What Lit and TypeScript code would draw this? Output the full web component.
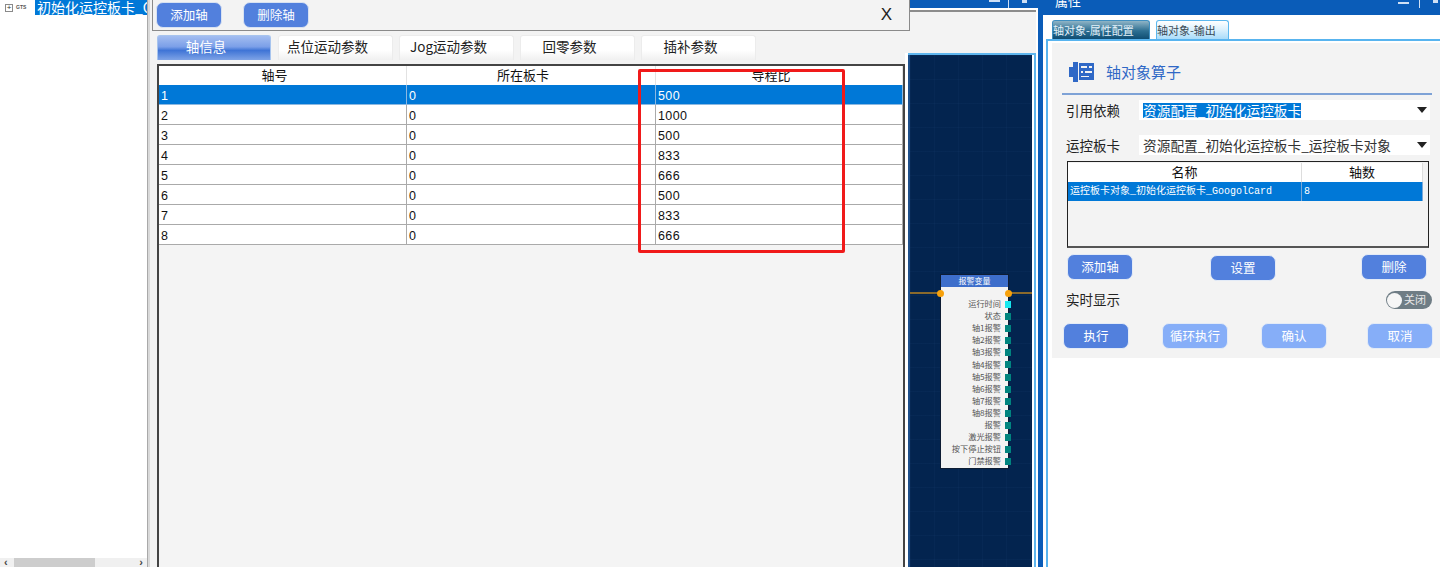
import { LitElement, html, css, svg } from "lit";
import { customElement } from "lit/decorators.js";

const axisRows = [
  ["1", "0", "500"], ["2", "0", "1000"], ["3", "0", "500"], ["4", "0", "833"],
  ["5", "0", "666"], ["6", "0", "500"], ["7", "0", "833"], ["8", "0", "666"],
];
const ports = ["运行时间", "状态", "轴1报警", "轴2报警", "轴3报警", "轴4报警", "轴5报警", "轴6报警", "轴7报警", "轴8报警", "报警", "激光报警", "按下停止按钮", "门禁报警"];

@customElement("app-root")
export class AppRoot extends LitElement {
  static styles = css`
    :host { display: block; width: 1440px; height: 567px; overflow: hidden; background: #fff; font-family: "Noto Sans CJK SC", "Liberation Sans", sans-serif; font-size: 13px; color: #111; }
    * { box-sizing: border-box; }
    .page { position: relative; display: flex; width: 1440px; height: 567px; overflow: hidden; }

    .tree { width: 148px; flex: none; display: flex; flex-direction: column; border-right: 1px solid #a9a9a9; }
    .tree-row { display: flex; align-items: flex-start; height: 16px; overflow: hidden; padding-left: 5px; flex: none; }
    .exp { width: 8px; height: 8px; margin-top: 4px; border: 1px solid #8a8a8a; font: 8px/6px "Liberation Sans", sans-serif; text-align: center; color: #333; flex: none; }
    .gts { font: bold 5px/15px "Liberation Sans", sans-serif; color: #555; width: 22px; padding-left: 3px; flex: none; }
    .sel { background: #0078d7; color: #fff; font-size: 14px; line-height: 15px; white-space: nowrap; flex: 1; overflow: hidden; padding-left: 2px; }
    .tree-fill { flex: 1; }
    .hscroll { height: 9px; background: #f0f0f0; display: flex; align-items: center; flex: none; font: bold 11px/9px "Liberation Sans", sans-serif; color: #444; justify-content: space-between; position: relative; padding: 0 4px; }
    .thumb { position: absolute; left: 14px; width: 81px; top: 0; bottom: 0; background: #cdcdcd; }

    .work { width: 890px; flex: none; display: flex; background: #fff; }
    .editor { width: 757px; flex: none; background: #f3f3f3; border-left: 2px solid #d9d9d9; display: flex; flex-direction: column; padding: 35px 0 0 7px; }
    .tabs { display: flex; height: 25px; flex: none; }
    .tab { width: 115px; margin-right: 6px; padding-right: 16px; background: linear-gradient(#fff 60%, #f0f0f0); border: 1px solid #ececec; border-bottom: none; border-radius: 3px 3px 0 0; text-align: center; line-height: 21px; font-size: 13.5px; color: #222; }
    .tab.on { width: 114px; margin-right: 7px; background: linear-gradient(#a3bdf0, #7b9fe8 45%, #3f74d6 60%, #7ea3e6); color: #fff; border-color: #a7c4ee; }
    .grid { margin-top: 4px; flex: 1; border: 2px solid #444; border-bottom: none; background: #f4f4f4; width: 748px; }
    .g-row { display: grid; grid-template-columns: 248px 249px 247px; grid-template-rows: 20px; height: 20px; }
    .g-row.head { grid-template-rows: 19px; height: 19px; background: #fff; font-size: 13px; }
    .g-row.head > div { text-align: center; line-height: 18px; padding-right: 16px; border-right: 1px solid #e2e2e2; }
    .g-row.body { background: #fff; font: 12.5px/19px "Liberation Sans", sans-serif; letter-spacing: .4px; }
    .g-row.body > div { border-right: 1px solid #aaa; border-bottom: 1px solid #aaa; padding: 2px 0 0 2px; }
    .g-row.body.active { background: #0078d7; color: #fff; }
    .g-row.body.active > div { border-bottom-color: #8cb8e0; border-right-color: #8cb8e0; }

    .canvas-col { flex: 1; display: flex; flex-direction: column; min-width: 0; padding-right: 2px; }
    .topblue { height: 8px; background: #0a5cb8; flex: none; margin-right: -2px; display: flex; justify-content: flex-end; padding-right: 11px; gap: 8px; }
    .dash { width: 11px; height: 2px; background: #cfe0f5; }
    .vbar { width: 1px; height: 8px; background: #cfe0f5; }
    .stub { width: 5px; height: 3px; background: #cfe0f5; margin-left: 5px; }
    .gutter { height: 45px; background: #f3f3f3; border-top: 2px solid #fff; flex: none; }
    .gutter::before { content: ""; display: block; height: 2px; background: #8c8c8c; }
    .canvas-frame { flex: 1; margin-left: 3px; border-top: 2px solid #5fb6ee; border-right: 2px solid #5fb6ee; padding-right: 2px; background: #fff; display: flex; min-height: 0; }
    .canvas { position: relative; flex: 1; border-left: 2px solid #1e4f8a;
      background-color: #03244f;
      background-image: linear-gradient(rgba(70,120,180,.05) 1px, transparent 1px), linear-gradient(90deg, rgba(70,120,180,.05) 1px, transparent 1px);
      background-size: 24px 24px; }
    .wire { position: absolute; left: 0; right: 0; top: 237px; height: 2px; background: #8a6a2c; }
    .node { position: absolute; left: 30px; top: 219px; width: 69px; height: 195px; background: #f3f3f3; border: 1px solid #0d1c33; }
    .node-h { height: 12px; background: #3d6ecb; color: #fff; font-size: 8px; line-height: 11px; text-align: center; }
    .node-ports { padding-top: 10px; display: flex; flex-direction: column; }
    .port { height: 12.1px; display: flex; justify-content: flex-end; align-items: center; font-size: 8.2px; color: #555; padding-right: 7px; position: relative; white-space: nowrap; }
    .port::after { content: ""; position: absolute; right: -3px; top: 4px; width: 6px; height: 7px; background: #00847f; }
    .port.first::after { background: #16e7ee; }
    .pin { position: absolute; top: 15px; width: 7px; height: 7px; border-radius: 50%; background: #f7a10c; }
    .pin.l { left: -4px; } .pin.r { right: -4px; }

    .props { flex: 1; min-width: 0; display: flex; flex-direction: column; }
    .props-top { height: 15px; background: #0a5cb8; color: #fff; flex: none; display: flex; justify-content: space-between; overflow: hidden; padding-left: 17px; font-size: 13px; line-height: 2px; }
    .props-ctl { display: flex; gap: 10px; padding: 2px 2px 0 0; align-items: flex-start; }
    .props-ctl .vbar { margin-top: -2px; }
    .props-ctl .stub { margin: -2px 0 0 3px; }
    .props-body { flex: 1; display: flex; min-height: 0; }
    .rail { width: 5px; background: #0a5cb8; flex: none; }
    .props-main { flex: 1; min-width: 0; display: flex; flex-direction: column; padding-top: 5px; }
    .ptabs { display: flex; height: 19px; flex: none; padding-left: 9px; font-size: 11px; gap: 6px; }
    .ptab { border: 1px solid #5cb8ee; border-bottom: none; border-radius: 3px 3px 0 0; line-height: 18px; background: linear-gradient(#fff, #d9f0fd 50%, #a9dcfa); width: 73px; color: #3a4a55; white-space: nowrap; overflow: hidden; }
    .ptab.on { width: 98px; background: linear-gradient(#8fb4c6, #2d6f92 55%, #0f4d72); color: #e4f2fa; border-color: #3f8fc0; }
    .frame { flex: 1; margin-left: 3px; border-left: 2px solid #58b4ef; border-top: 2px solid #58b4ef; background: #fff; padding: 2px 0 0 4px; display: flex; flex-direction: column; }
    .panel { height: 315px; background: #f3f3f3; padding: 0 8px 0 0; flex: none; display: flex; flex-direction: column; }
    .title { height: 50px; display: flex; align-items: center; padding: 7px 0 0 17px; gap: 12px; color: #2f68c6; font-size: 15px; flex: none; }
    .rule { height: 2px; background: #7ea2d6; margin-left: 10px; flex: none; }
    .frow { display: flex; align-items: center; height: 20px; padding-left: 14px; margin-top: 5px; flex: none; }
    .frow.second { margin-top: 15px; }
    .frow label { width: 62px; flex: none; font-size: 13.5px; color: #222; }
    .select { width: 291px; height: 20px; margin-left: 11px; background: #fff; display: flex; align-items: center; justify-content: space-between; padding-right: 3px; font-size: 13.7px; white-space: nowrap; }
    .select span.t { margin-left: 4px; color: #333; line-height: 18px; padding-bottom: 1px; }
    .select span.hl { background: #0078d7; color: #fff; margin-left: 4px; line-height: 15px; }
    .caret { width: 0; height: 0; border-left: 5.5px solid transparent; border-right: 5.5px solid transparent; border-top: 6px solid #222; flex: none; }
    .mini { margin: 6px 0 0 15px; width: 362px; height: 87px; border: 1px solid #222; border-bottom: 2px solid #555; background: #f3f3f3; padding-top: 1px; flex: none; }
    .m-row { display: grid; grid-template-columns: 234px 121px; height: 19px; width: 355px; background: #fff; text-align: center; line-height: 17px; font-size: 13px; }
    .m-row > div { border-right: 1px solid #ddd; }
    .m-row.b { background: #0078d7; color: #fff; text-align: left; font: 10px/19px "Liberation Mono", "Noto Sans CJK SC", monospace; white-space: nowrap; }
    .m-row.b > div { border-color: #7aa8d8; overflow: hidden; padding-left: 2px; }
    .btns { display: flex; align-items: flex-start; flex: none; }
    .btn { width: 66px; height: 26px; border-radius: 7px; border: 1px solid #e3ebf7; background: #5280dd; color: #fff; text-align: center; line-height: 23px; font-size: 12.5px; flex: none; }
    .btn.soft { background: #86aef8; }
    .axisbtns { margin: 6px 0 0 15px; }
    .axisbtns .set { margin: 1px 0 0 77px; }
    .axisbtns .del { margin-left: 85px; }
    .live { display: flex; justify-content: space-between; align-items: center; padding-left: 14px; margin-top: 10px; height: 18px; font-size: 13.5px; color: #222; flex: none; }
    .live > span { padding-bottom: 2px; }
    .toggle { width: 46px; height: 18px; background: #6f7d85; border-radius: 9px; position: relative; color: #e8e8e8; font-size: 11px; line-height: 17px; padding-left: 18px; white-space: nowrap; }
    .toggle::before { content: ""; position: absolute; left: 1px; top: 1.5px; width: 15px; height: 15px; border-radius: 50%; background: #f6f6f6; }
    .runbtns { margin: 14px 0 0 11px; gap: 33px; }
    .runbtns .last { margin-left: 7px; }

    .dialog { position: absolute; left: 152px; top: -1px; width: 758px; height: 32px; background: #f3f3f3; border: 1px solid #8a8a8a; border-top: none; display: flex; align-items: center; padding: 0 17px 0 3px; gap: 21px; }
    .dialog .btn { border-color: #d8e2f2; }
    .x { margin-left: auto; font: 17px "Liberation Sans", sans-serif; color: #222; }
    .mark { position: absolute; left: 638px; top: 69px; width: 207px; height: 184px; border: 3px solid #f01a1a; border-radius: 2px; pointer-events: none; }
  `;

  private icon() {
    return svg`<svg width="25" height="20" viewBox="0 0 25 20" fill="#2f68c6">
      <path d="M0 5h4V0h5v20H4v-5H0z"/>
      <path fill-rule="evenodd" d="M10 1h15v17H10zM12 4v2h6v-2zM20 4v2h3v-2zM12 9v2h2v-2zM16 9v2h7v-2zM12 14v1h8v-1z"/>
    </svg>`;
  }

  render() {
    return html`<div class="page">
      <div class="tree">
        <div class="tree-row"><span class="exp">+</span><span class="gts">GTS</span><span class="sel">初始化运控板卡_G</span></div>
        <div class="tree-fill"></div>
        <div class="hscroll"><span class="thumb"></span><span>‹</span><span>›</span></div>
      </div>

      <div class="work">
        <div class="editor">
          <div class="tabs">
            <div class="tab on">轴信息</div>
            <div class="tab">点位运动参数</div>
            <div class="tab">Jog运动参数</div>
            <div class="tab">回零参数</div>
            <div class="tab">插补参数</div>
          </div>
          <div class="grid">
            <div class="g-row head"><div>轴号</div><div>所在板卡</div><div>导程比</div></div>
            ${axisRows.map((r, i) => html`<div class="g-row body ${i === 0 ? "active" : ""}">${r.map((c) => html`<div>${c}</div>`)}</div>`)}
          </div>
        </div>
        <div class="canvas-col">
          <div class="topblue"><span class="dash"></span><span class="vbar"></span><span class="stub"></span></div>
          <div class="gutter"></div>
          <div class="canvas-frame">
            <div class="canvas">
              <div class="wire"></div>
              <div class="node">
                <div class="node-h">报警变量</div>
                <span class="pin l"></span><span class="pin r"></span>
                <div class="node-ports">${ports.map((p, i) => html`<div class="port ${i === 0 ? "first" : ""}">${p}</div>`)}</div>
              </div>
            </div>
          </div>
        </div>
      </div>

      <div class="props">
        <div class="props-top"><span>属性</span><span class="props-ctl"><span class="dash"></span><span class="vbar"></span><span class="stub"></span></span></div>
        <div class="props-body">
          <div class="rail"></div>
          <div class="props-main">
            <div class="ptabs"><div class="ptab on">轴对象-属性配置</div><div class="ptab">轴对象-输出</div></div>
            <div class="frame">
              <div class="panel">
                <div class="title">${this.icon()}<span>轴对象算子</span></div>
                <div class="rule"></div>
                <div class="frow"><label>引用依赖</label><div class="select"><span class="hl">资源配置_初始化运控板卡</span><span class="caret"></span></div></div>
                <div class="frow second"><label>运控板卡</label><div class="select"><span class="t">资源配置_初始化运控板卡_运控板卡对象</span><span class="caret"></span></div></div>
                <div class="mini">
                  <div class="m-row"><div>名称</div><div>轴数</div></div>
                  <div class="m-row b"><div>运控板卡对象_初始化运控板卡_GoogolCard</div><div>8</div></div>
                </div>
                <div class="btns axisbtns"><div class="btn">添加轴</div><div class="btn set">设置</div><div class="btn del">删除</div></div>
                <div class="live"><span>实时显示</span><div class="toggle">关闭</div></div>
                <div class="btns runbtns"><div class="btn">执行</div><div class="btn soft">循环执行</div><div class="btn soft">确认</div><div class="btn soft last">取消</div></div>
              </div>
            </div>
          </div>
        </div>
      </div>

      <div class="dialog"><div class="btn">添加轴</div><div class="btn">删除轴</div><span class="x">X</span></div>
      <div class="mark"></div>
    </div>`;
  }
}
